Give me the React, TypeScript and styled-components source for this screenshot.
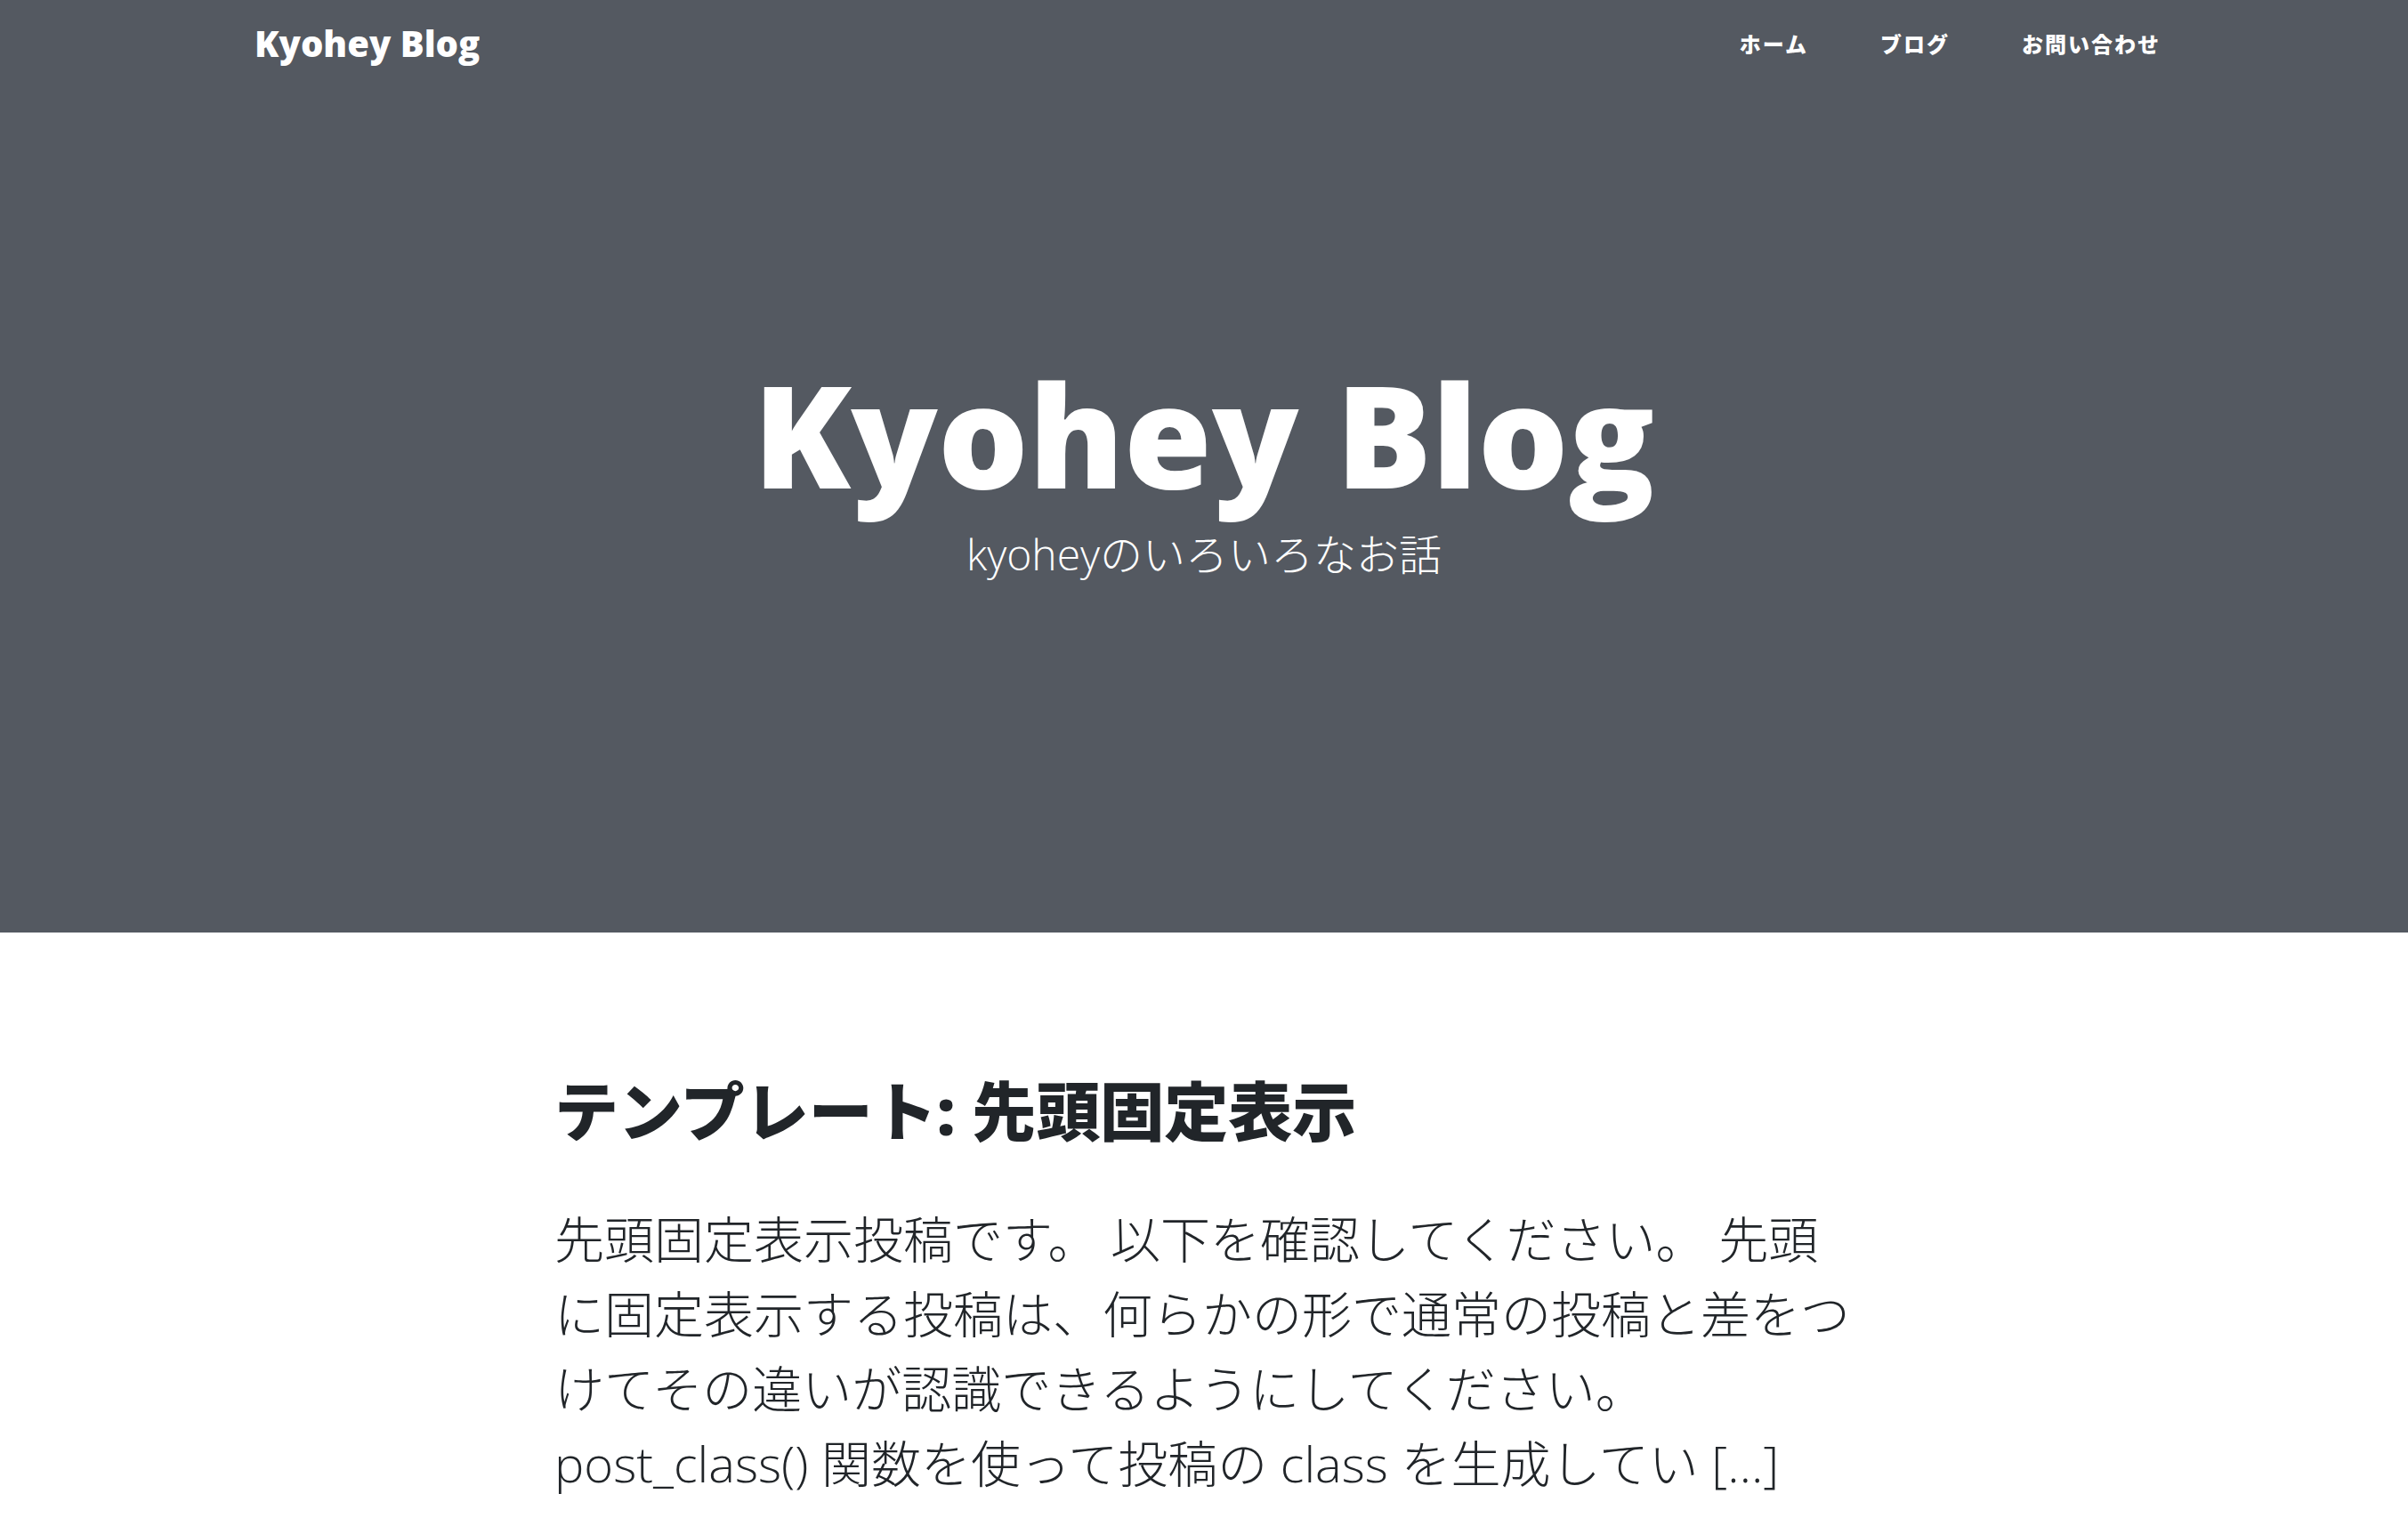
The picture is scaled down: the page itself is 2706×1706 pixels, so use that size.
import React from 'react';
import styled, { createGlobalStyle } from 'styled-components';

const GlobalStyle = createGlobalStyle`
  body {
    margin: 0;
    background: #ffffff;
    color: #212529;
    font-family: "Open Sans", "Noto Sans CJK JP", sans-serif;
  }
`;

const Masthead = styled.header`
  background: #545961;
  height: 1048px;
  display: flex;
  flex-direction: column;
`;

const NavBar = styled.nav`
  height: 96px;
  padding: 0 278px 0 286px;
  display: flex;
  align-items: center;
  justify-content: space-between;
`;

const Brand = styled.a`
  color: #fff;
  font-family: "Open Sans", "Noto Sans CJK JP", sans-serif;
  font-weight: 800;
  font-size: 40px;
  text-decoration: none;
`;

const NavList = styled.ul`
  list-style: none;
  margin: 0;
  padding: 0;
  display: flex;
  gap: 81px;
`;

const NavLink = styled.a`
  color: #fff;
  font-family: "Open Sans", "Noto Sans CJK JP", sans-serif;
  font-weight: 800;
  font-size: 24px;
  letter-spacing: 2px;
  text-decoration: none;
`;

const SiteHeading = styled.div`
  padding-top: 303px;
  text-align: center;
  color: #fff;
`;

const SiteTitle = styled.h1`
  margin: 0;
  font-size: 160px;
  font-weight: 800;
  line-height: 1.1;
`;

const Subheading = styled.span`
  display: block;
  margin-top: 22px;
  font-size: 48px;
  font-weight: 300;
  line-height: 1.1;
`;

const Main = styled.main`
  max-width: 1460px;
  margin: 0 auto;
  padding-top: 100px;
`;

const PostPreview = styled.article`
  a {
    color: #212529;
    text-decoration: none;
  }
`;

const PostTitle = styled.h2`
  margin: 57px 0 59px;
  font-size: 72px;
  font-weight: 800;
  line-height: 1.2;
`;

const PostSubtitle = styled.h3`
  margin: 0 0 20px;
  font-size: 56px;
  font-weight: 300;
  line-height: 84px;
`;

const links = ['ホーム', 'ブログ', 'お問い合わせ'];

export default function App() {
  return (
    <>
      <GlobalStyle />
      <Masthead>
        <NavBar>
          <Brand href="#">Kyohey Blog</Brand>
          <NavList>
            {links.map((l) => (
              <li key={l}>
                <NavLink href="#">{l}</NavLink>
              </li>
            ))}
          </NavList>
        </NavBar>
        <SiteHeading>
          <SiteTitle>Kyohey Blog</SiteTitle>
          <Subheading>kyoheyのいろいろなお話</Subheading>
        </SiteHeading>
      </Masthead>
      <Main>
        <PostPreview>
          <a href="#">
            <PostTitle>テンプレート: 先頭固定表示</PostTitle>
            <PostSubtitle>
              先頭固定表示投稿です。 以下を確認してください。 先頭に固定表示する投稿は、何らかの形で通常の投稿と差をつけてその違いが認識できるようにしてください。 post_class() 関数を使って投稿の class を生成してい […]
            </PostSubtitle>
          </a>
        </PostPreview>
      </Main>
    </>
  );
}
